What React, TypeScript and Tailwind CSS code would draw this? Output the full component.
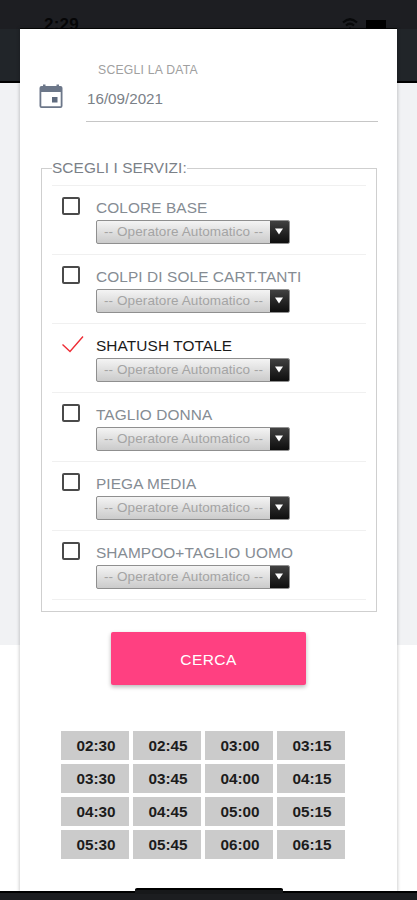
import { useState } from "react"

const SERVICES = [
  "COLORE BASE",
  "COLPI DI SOLE CART.TANTI",
  "SHATUSH TOTALE",
  "TAGLIO DONNA",
  "PIEGA MEDIA",
  "SHAMPOO+TAGLIO UOMO",
]

const TIMES = [
  "02:30", "02:45", "03:00", "03:15",
  "03:30", "03:45", "04:00", "04:15",
  "04:30", "04:45", "05:00", "05:15",
  "05:30", "05:45", "06:00", "06:15",
]

function CalendarIcon() {
  return (
    <svg width="24" height="24" viewBox="0 0 24 24" className="mt-[55px] ml-[19px] shrink-0">
      <path d="M4 0.500h2.500v3H4zM17.500 0.500H20v3h-2.500z" fill="#6c7789" />
      <path d="M2.500 2h19a2 2 0 0 1 2 2v18a2 2 0 0 1-2 2h-19a2 2 0 0 1-2-2V4a2 2 0 0 1 2-2zM2.300 8v14.300h19.400V8z" fillRule="evenodd" fill="#6c7789" />
      <rect x="13" y="13" width="5.500" height="5.500" fill="#5f6b7e" />
    </svg>
  )
}

function ServiceRow({ name, checked, onToggle }: { name: string; checked: boolean; onToggle: () => void }) {
  return (
    <div className="flex h-[69px] border-b border-[#f0f0f0] pl-[10px]">
      <button onClick={onToggle} aria-label={name} className="mt-[11px] h-[18px] w-[34px] shrink-0">
        {checked ? (
          <svg width="22" height="18" viewBox="0 0 22 18">
            <path d="M0.500 9.500L8 16.500L21 1.500" fill="none" stroke="#ee2c35" strokeWidth="1.400" />
          </svg>
        ) : (
          <div className="h-[18px] w-[18px] rounded-[2px] border-2 border-[#4a4a4a]" />
        )}
      </button>
      <div className="pt-[12px]">
        <div
          className={
            checked
              ? "h-[22px] text-[15.4px] leading-[20px] tracking-[0.1px] whitespace-nowrap text-[#1a1a1a]"
              : "h-[22px] text-[15.4px] leading-[20px] tracking-[0.1px] whitespace-nowrap text-[#858c93]"
          }
        >
          {name}
        </div>
        <div className="flex h-[24px] w-[194px] overflow-hidden rounded-[2px] border border-[#8f8f8f] bg-linear-to-b from-[#f4f4f4] to-[#cbcbcb]">
          <span className="flex-1 pl-[7px] text-[13.5px] leading-[22px] tracking-[0.09px] whitespace-nowrap text-[#a4a4a4]">
            -- Operatore Automatico --
          </span>
          <span className="-my-px -mr-px flex w-[20px] shrink-0 items-center justify-center bg-linear-to-b from-[#444] to-[#0c0c0c]">
            <svg width="8" height="7" viewBox="0 0 8 7" className="-mt-px -ml-[2px]">
              <path d="M0 0.500h8L4 6.500z" fill="#fff" />
            </svg>
          </span>
        </div>
      </div>
    </div>
  )
}

function App() {
  const [selected, setSelected] = useState(["SHATUSH TOTALE"])

  const toggle = (name: string) =>
    setSelected(selected.includes(name) ? selected.filter((s) => s !== name) : [...selected, name])

  return (
    <div className="flex h-[900px] w-[417px] flex-col overflow-hidden bg-white font-['Liberation_Sans',sans-serif]">
      {/* status bar */}
      <header className="flex h-[29px] shrink-0 justify-between bg-[#1d1e22] pr-[31px] pl-[44px] text-[#050506]">
        <span className="mt-[15px] text-[17px] leading-[20px] font-bold tracking-[0.2px]">2:29</span>
        <div className="flex gap-[8px] pt-[18px]">
          <svg width="16" height="12" viewBox="0 0 16 12" fill="none" stroke="#08090a" strokeWidth="2.200">
            <path d="M1 4.500Q8-2 15 4.500M4 7.500Q8 4 12 7.500" />
            <path d="M7 10.500h2" />
          </svg>
          <div className="mt-[2px] h-[9px] w-[20px] bg-black" />
        </div>
      </header>

      <div className="flex h-[862px] shrink-0 bg-[linear-gradient(#212529_0,#212529_52px,#000_52px,#000_54px,#f1f2f4_54px,#f1f2f4_616px,#fff_616px)] px-[20px]">
        <main className="w-[378px] bg-white shadow-[0_0_3px_1px_rgba(0,0,0,0.18),0_-1px_0_0_rgba(0,0,0,0.8)]">
          <div className="flex h-[129px]">
            <CalendarIcon />
            <div className="ml-[23px] h-[93px] w-[292px] border-b border-[#c6c6c6]">
              <div className="pt-[33px] pl-[12px] text-[12.2px] leading-[16px] tracking-[0.25px] text-[#a0a0a0]">
                SCEGLI LA DATA
              </div>
              <div className="pt-[11px] pl-px text-[15.2px] leading-[20px] text-[#7b8188]">16/09/2021</div>
            </div>
          </div>

          <fieldset className="ml-[21px] h-[454px] w-[336px] border border-[#cfcfcf] px-[10px]">
            <legend className="h-[20px] text-[15.4px] leading-[20px] tracking-[0.1px] whitespace-nowrap text-[#7b8188]">
              SCEGLI I SERVIZI:
            </legend>
            <div className="mt-[7px] w-[314px] border-t border-[#f0f0f0]">
              {SERVICES.map((name) => (
                <ServiceRow
                  key={name}
                  name={name}
                  checked={selected.includes(name)}
                  onToggle={() => toggle(name)}
                />
              ))}
            </div>
          </fieldset>

          <button className="mt-[20px] ml-[91px] block h-[53px] w-[195px] rounded-[2px] bg-[#ff4081] pt-[2px] text-[15.5px] tracking-[0.4px] text-white shadow-[0_2px_4px_rgba(0,0,0,0.28)]">
            CERCA
          </button>

          <div className="mt-[46px] ml-[41px] grid w-[284px] grid-cols-[68px_68px_68px_68px] gap-x-[4px] gap-y-[4px]">
            {TIMES.map((time) => (
              <button
                key={time}
                className="h-[29px] bg-[#cbcbcb] pt-px pl-[2px] text-[15.3px] leading-[28px] font-bold text-[#1c1c1c]"
              >
                {time}
              </button>
            ))}
          </div>
        </main>
      </div>

      {/* home indicator */}
      <footer className="relative h-[9px] shrink-0 border-t-2 border-black bg-[#1c1d20]">
        <div className="absolute -top-[5px] left-[135px] h-[6px] w-[148px] rounded-t-[2px] border-t-2 border-black bg-[#17181a]" />
      </footer>
    </div>
  )
}

export default App
